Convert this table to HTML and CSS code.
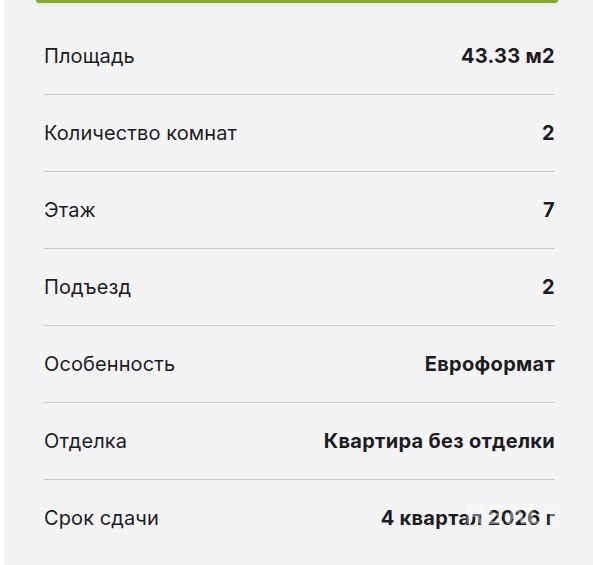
FILE: index.html
```html
<!DOCTYPE html>
<html lang="ru">
<head>
<meta charset="utf-8">
<link rel="stylesheet" href="styles.css">
</head>
<body>
<div class="panel">
  <div class="btn-edge"></div>
  <div class="list">
    <div class="row"><span class="label">Площадь</span><span class="value">43.33 м2</span></div>
    <div class="row"><span class="label">Количество комнат</span><span class="value">2</span></div>
    <div class="row"><span class="label">Этаж</span><span class="value">7</span></div>
    <div class="row"><span class="label">Подъезд</span><span class="value">2</span></div>
    <div class="row"><span class="label">Особенность</span><span class="value">Евроформат</span></div>
    <div class="row"><span class="label">Отделка</span><span class="value">Квартира без отделки</span></div>
    <div class="row last"><span class="label">Срок сдачи</span><span class="value">4 квартал 2026 г</span></div>
  </div>
  <div class="watermark">REALT</div>
</div>
</body>
</html>
```
FILE: styles.css
```css
html, body {
  margin: 0;
  padding: 0;
  background: #ffffff;
}
body {
  font-family: Inter, "Noto Sans", sans-serif;
  color: #1d1d1f;
}
.panel {
  position: relative;
  margin-left: 4px;
  height: 565px;
  background: #f4f4f6;
  overflow: hidden;
}
.btn-edge {
  height: 3px;
  margin: 0 35px 0 32px;
  background: #8aa634;
  border-radius: 0 0 12px 12px;
  box-shadow: 0 2px 4px rgba(120, 150, 40, 0.15);
}
.list {
  padding: 15px 38px 0 40px;
}
.row {
  display: flex;
  justify-content: space-between;
  align-items: center;
  height: 76px;
  border-bottom: 1px solid #c9c9cc;
}
.row.last {
  border-bottom: none;
}
.label {
  font-size: 20px;
  font-weight: 400;
  letter-spacing: 0.1px;
}
.value {
  font-size: 20px;
  font-weight: 700;
  letter-spacing: 0.3px;
}
.watermark {
  position: absolute;
  right: 32px;
  bottom: 34px;
  font-family: "Liberation Sans", sans-serif;
  font-size: 28px;
  font-weight: 700;
  letter-spacing: 1px;
  color: rgba(255, 255, 255, 0.4);
}
```
